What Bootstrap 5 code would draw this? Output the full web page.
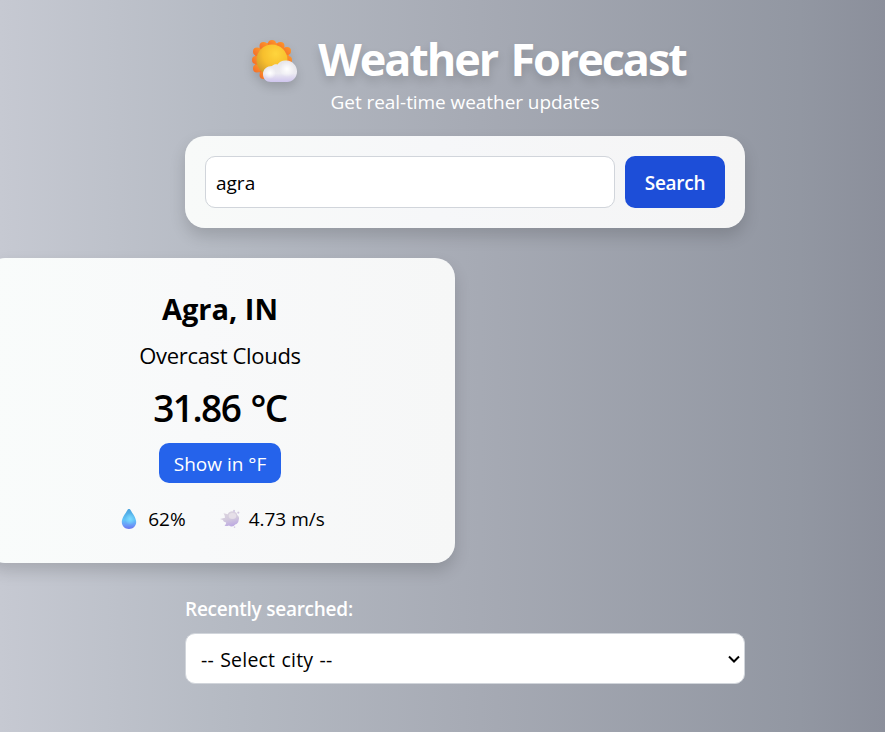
<!DOCTYPE html>
<html lang="en">
<head>
<meta charset="utf-8">
<meta name="viewport" content="width=device-width, initial-scale=1">
<title>Weather Forecast</title>
<link href="https://cdn.jsdelivr.net/npm/bootstrap@5.3.0/dist/css/bootstrap.min.css" rel="stylesheet">
<style>
html{overflow:hidden}
body{font-family:"Open Sans","Noto Sans",sans-serif;font-size:19px;line-height:27px;color:#000;min-height:732px;background:linear-gradient(90deg,#c6c9d2 0,#b5bac3 225px,#a6aab4 480px,#9297a2 800px,#8b8f9b 885px);overflow:hidden}
.weather-page{width:560px;margin-left:185px;padding-top:29px}
.page-title{font-size:45px;font-weight:700;line-height:60px;text-shadow:0 5px 10px rgba(0,0,0,.15);letter-spacing:-2.05px;word-spacing:3.5px;padding-left:7px}
.title-sun{width:47px;height:47px;margin:7px 20px 0 0;filter:drop-shadow(0 5px 5px rgba(0,0,0,.14))}
.subtitle{font-size:19px;line-height:24px;letter-spacing:-.06px;margin-top:1px}
.panel{background:linear-gradient(90deg,#f8faf9,#f6f7f9 45%,#f5f5f5);border-radius:20px;box-shadow:0 8px 16px rgba(0,0,0,.15)}
.weather-panel.panel{background:linear-gradient(90deg,#f9fcfb,#f8f9fa 45%,#f6f7f7)}
.search-panel{height:92px;margin-top:22px;padding:20px;gap:10px}
.city-input{height:52px;border:1px solid #d1d5db;border-radius:10px;padding:2px 10px 0;font-size:19px;color:#000}
.search-btn{width:100px;background:#1d4ed8;color:#fff;border-radius:10px;font-size:19px;font-weight:600;letter-spacing:-.3px;padding:2px 0 0}
.weather-panel{width:470px;height:305px;margin:30px 0 0 -200px;padding-top:31px}
.city-name{font-size:29px;line-height:40px;font-weight:700}
.condition{font-size:22px;line-height:32px;margin-top:10px;letter-spacing:-.33px}
.temperature{font-size:37px;line-height:52px;font-weight:600;margin-top:11px;letter-spacing:-1.5px;word-spacing:2px}
.unit-btn{width:122px;height:40px;background:#2563eb;color:#fff;border-radius:10px;font-size:19px;padding:2px 0 0;margin-top:9px}
.metrics{margin-top:23px;padding-left:4px;gap:34px}
.metric-icon{width:20px;height:20px;margin:-2px 9px 0 0}
.recent-label{font-weight:600;margin-top:33px;line-height:27px;letter-spacing:-.25px}
.city-select{height:51px;margin-top:10px;border:1px solid #d1d5db;border-radius:10px;padding:3px 15px 0;font-size:19.5px;letter-spacing:.2px;word-spacing:1px;color:#000;background-image:none;background-color:#fff}
.select-arrow{right:5px;top:22px;width:12px;height:8px;pointer-events:none}
</style>
</head>
<body>
<main class="weather-page">
<header class="text-center text-white">
<h1 class="page-title d-flex justify-content-center align-items-center mb-0">
<svg class="title-sun flex-shrink-0" viewBox="0 0 47 47" aria-hidden="true">
<defs>
<radialGradient id="sun" cx=".62" cy=".3" r=".75"><stop offset="0" stop-color="#ffd53d"/><stop offset=".55" stop-color="#f7bf2d"/><stop offset="1" stop-color="#cf9a2c"/></radialGradient>
<linearGradient id="rays" x1="1" y1="0" x2="0" y2="1"><stop offset="0" stop-color="#ff9a2a"/><stop offset="1" stop-color="#f26a2a"/></linearGradient>
<linearGradient id="cloud" x1="0" y1="0" x2="0" y2="1"><stop offset="0" stop-color="#e6e5ea"/><stop offset=".6" stop-color="#ecebf1"/><stop offset="1" stop-color="#cfc5ee"/></linearGradient>
<radialGradient id="puff"><stop offset="0" stop-color="#fff"/><stop offset="1" stop-color="#fff" stop-opacity="0"/></radialGradient>
</defs>
<g fill="url(#rays)"><circle cx="21" cy="21" r="17.5"/><circle cx="21" cy="5" r="4"/><circle cx="29.500" cy="7" r="4"/><circle cx="36" cy="12" r="4"/><circle cx="37" cy="21" r="4"/><circle cx="12.500" cy="7" r="4"/><circle cx="6" cy="12.500" r="4"/><circle cx="5" cy="21" r="4"/><circle cx="6" cy="29.500" r="4"/><circle cx="12.500" cy="36" r="4"/></g>
<circle cx="21" cy="21" r="15.500" fill="url(#sun)"/>
<path d="M20 43c-5 0-8-3.500-8-8 0-5 4-8 9-8 1.500-1.500 3.500-2 5.500-1.500C28.500 22.500 32 21 35.500 21.500 41.500 22 46 26.500 46 32.500S41.500 43 36 43z" fill="url(#cloud)"/>
<circle cx="19" cy="34" r="6" fill="url(#puff)"/><circle cx="36" cy="30" r="8" fill="url(#puff)"/>
</svg><span class="text-nowrap">Weather Forecast</span></h1>
<p class="subtitle mb-0">Get real-time weather updates</p>
</header>
<form class="panel search-panel d-flex">
<input class="form-control city-input" type="text" value="agra" aria-label="City">
<button class="btn search-btn flex-shrink-0" type="button">Search</button>
</form>
<section class="panel weather-panel text-center">
<h2 class="city-name mb-0">Agra, IN</h2>
<p class="condition mb-0">Overcast Clouds</p>
<p class="temperature mb-0">31.86 °C</p>
<button class="btn unit-btn" type="button">Show in °F</button>
<div class="metrics d-flex justify-content-center">
<div class="d-flex align-items-center"><svg class="metric-icon" viewBox="0 0 20 20" aria-hidden="true"><defs><linearGradient id="drop" x1="0" y1="0" x2="0" y2="1"><stop offset="0" stop-color="#4aa3de"/><stop offset=".55" stop-color="#62c4f8"/><stop offset=".8" stop-color="#6b9cf8"/><stop offset="1" stop-color="#6a74ee"/></linearGradient><radialGradient id="shine"><stop offset="0" stop-color="#7edcff"/><stop offset="1" stop-color="#7edcff" stop-opacity="0"/></radialGradient></defs><path d="M10 0c.8 0 1.300.5 1.700 1.200C13.500 4.500 17.200 8.800 17.200 13c0 4.200-3.200 7-7.200 7s-7.200-2.800-7.200-7c0-4.200 3.700-8.500 5.500-11.800C8.700.5 9.200 0 10 0z" fill="url(#drop)"/><ellipse cx="11" cy="10" rx="5" ry="6" fill="url(#shine)"/></svg>62%</div>
<div class="d-flex align-items-center"><svg class="metric-icon" viewBox="0 0 20 20" aria-hidden="true"><defs><linearGradient id="gust" x1=".3" y1="0" x2=".6" y2="1"><stop offset="0" stop-color="#ddd6e0"/><stop offset=".5" stop-color="#d3cadd"/><stop offset="1" stop-color="#bca8e2"/></linearGradient></defs><g fill="url(#gust)"><path d="M0 10 5 8.700C5 7 4.300 5.500 3.500 4.200c2 .1 3 .6 4.200 1C9 3 11 2 13 2.500c2.500 0 4 1.500 4.200 3.500 1.800 1 2.300 3 1.500 5-.2 2.500-1.500 4-3.500 4.500-1.500 2.200-4.300 2.500-6.200 1-1.300.5-3 .6-4.500.5 1-1 1.600-2.300 1.700-3.500C4 13 3 12 3 11z"/><circle cx="14" cy="1.700" r="1"/><circle cx="18.300" cy="3.500" r="1.100"/><circle cx="14.500" cy="18" r=".8"/></g><ellipse cx="12.500" cy="7" rx="3.800" ry="3" fill="#ece7ed" opacity=".7"/></svg>4.73 m/s</div>
</div>
</section>
<div class="recent-label text-white">Recently searched:</div>
<div class="position-relative">
<select class="form-select city-select" aria-label="Recent cities"><option>-- Select city --</option></select>
<svg class="select-arrow position-absolute" viewBox="0 0 12 8" fill="none" stroke="#000" stroke-width="2" aria-hidden="true"><path d="M1 1.500 6 6.500 11 1.500"/></svg>
</div>
</main>
<script src="https://cdn.jsdelivr.net/npm/bootstrap@5.3.0/dist/js/bootstrap.bundle.min.js"></script>
</body>
</html>
